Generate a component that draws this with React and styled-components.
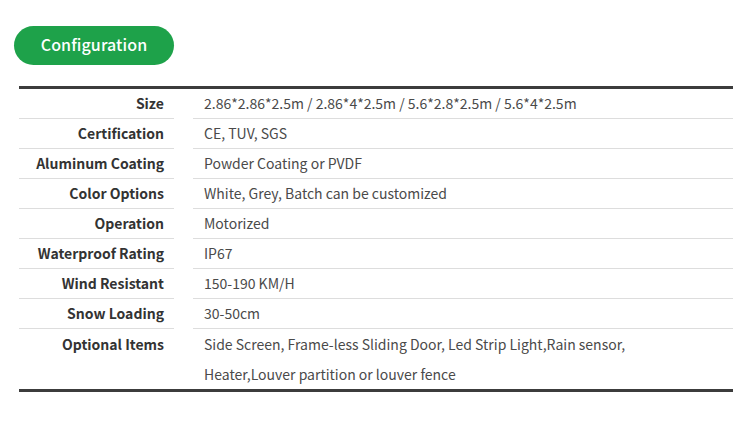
import styled, { createGlobalStyle } from "styled-components";

const GlobalStyle = createGlobalStyle`
  html, body {
    margin: 0;
    padding: 0;
    background: #ffffff;
  }
  body {
    font-family: "Noto Sans CJK SC", "Noto Sans", sans-serif;
  }
`

const Page = styled.div`
  width: 750px;
  height: 433px;
  padding: 26px 17px 0 19px;
  box-sizing: border-box;
`

const Badge = styled.div`
  width: 160px;
  height: 39px;
  padding-bottom: 4px;
  box-sizing: border-box;
  margin-left: -5px;
  border-radius: 20px;
  background-color: #1ea24a;
  color: #ffffff;
  font-size: 16px;
  font-weight: 500;
  display: flex;
  align-items: center;
  justify-content: center;
  letter-spacing: 0.1px;
`

const SpecTable = styled.div`
  margin-top: 21px;
  border-top: 3px solid #3c3c3c;
  border-bottom: 3px solid #3c3c3c;
  display: grid;
  grid-template-columns: 155px 1fr;
  column-gap: 19px;
`

const Cell = styled.div`
  font-size: 14px;
  line-height: ${(p) => (p.$last ? "30px" : "29px")};
  border-bottom: ${(p) => (p.$last ? "none" : "1px solid #dddddd")};
`

const Label = styled(Cell)`
  padding-right: 10px;
  text-align: right;
  font-weight: 700;
  color: #333333;
`

const Value = styled(Cell)`
  padding-left: 11px;
  color: #4a4a4a;
`

const specs = [
  ["Size", "2.86*2.86*2.5m / 2.86*4*2.5m / 5.6*2.8*2.5m / 5.6*4*2.5m"],
  ["Certification", "CE, TUV, SGS"],
  ["Aluminum Coating", "Powder Coating or PVDF"],
  ["Color Options", "White, Grey, Batch can be customized"],
  ["Operation", "Motorized"],
  ["Waterproof Rating", "IP67"],
  ["Wind Resistant", "150-190 KM/H"],
  ["Snow Loading", "30-50cm"],
  [
    "Optional Items",
    <>
      Side Screen, Frame-less Sliding Door, Led Strip Light,Rain sensor,
      <br />
      Heater,Louver partition or louver fence
    </>,
  ],
]

const App = () => {
  return (
    <Page>
      <GlobalStyle />
      <Badge>Configuration</Badge>
      <SpecTable>
        {specs.map(([label, value], i) => {
          const last = i === specs.length - 1
          return [
            <Label key={`l${i}`} $last={last}>{label}</Label>,
            <Value key={`v${i}`} $last={last}>{value}</Value>,
          ]
        })}
      </SpecTable>
    </Page>
  )
}

export default App
